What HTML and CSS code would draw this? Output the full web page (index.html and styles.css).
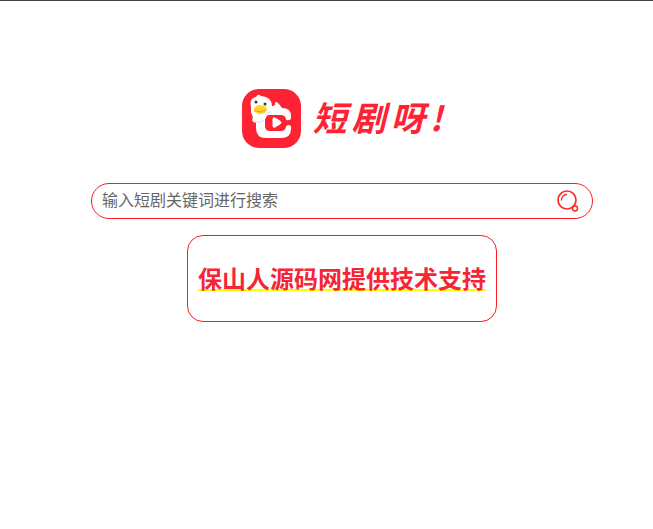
FILE: index.html
```html
<!DOCTYPE html>
<html lang="zh-CN">
<head>
    <meta charset="UTF-8">
    <meta name="viewport" content="width=device-width, initial-scale=1.0">
    <title>短剧呀!</title>
    <link rel="stylesheet" href="styles.css">
</head>
<body>
    <main class="container">
        <h1 class="logo">
            <svg class="logo-icon" viewBox="0 0 59 59" aria-hidden="true">
                <rect width="59" height="59" rx="17" fill="#ff2233"/>
                <!-- 字母 C -->
                <path d="M25 18L31 17Q34 16 33 14Q33 12 36 14Q38 16 40 19Q49 19 49 27V29Q49 31 47 31Q44 32 44 30Q43 26 39 26H28Q23 26 23 31V37Q23 42 28 42H39Q43 42 44 38Q44 36 47 36Q49 36 49 38V40Q49 49 39 49H24Q14 49 14 39V27Q15 18 25 18Z" fill="#fff"/>
                <path d="M31 30Q31 28 33 29L38 32Q40 34 38 35L33 38Q31 39 31 37Z" fill="#fff" stroke="#fff" stroke-linejoin="round"/>
                <!-- 小鸭子 -->
                <path d="M9 18Q7 9 14 8Q16 4 19 7Q30 8 30 17Q30 22 25 24L24 29L19 33Q11 35 10 31Q12 28 9 24Z" fill="#fff"/>
                <path d="M10 31Q13 34 19 33L22 31M25 24Q28 25 29 22" fill="none" stroke="#d9dce2" stroke-width="1"/>
                <path d="M12 20Q14 16 18 16Q25 17 25 20Q24 25 18 25Q11 24 12 20Z" fill="#ffd329"/>
                <path d="M13 22Q18 24 24 21" fill="none" stroke="#e9a51d" stroke-width="1"/>
                <circle cx="14" cy="13" r="1.5" fill="#334"/>
                <circle cx="23" cy="15" r="1.5" fill="#334"/>
            </svg>
            <span class="logo-text"><span>短</span><span>剧</span><span>呀</span><span>!</span></span>
        </h1>
        <form class="search">
            <input class="search-input" type="text" placeholder="输入短剧关键词进行搜索" aria-label="输入短剧关键词进行搜索">
            <button class="search-btn" type="submit" aria-label="搜索">
                <svg viewBox="0 0 22 22" fill="none" stroke="#fb2a30" aria-hidden="true">
                    <circle cx="10" cy="10" r="9" stroke-width="1.7"/>
                    <path d="M4.5 10A5.5 5.5 0 0 1 9.5 4.5" stroke-width="1.4" stroke-linecap="round"/>
                    <circle cx="18" cy="18.5" r="2.5" fill="#fff" stroke-width="1.5"/>
                </svg>
            </button>
        </form>
        <div class="support">
            <h2>保山人源码网提供技术支持</h2>
        </div>
    </main>
</body>
</html>
```

FILE: styles.css
```css
* {
    box-sizing: border-box;
}
body {
    margin: 0;
    border-top: 1px solid #404040;
    background: #fff;
    font-family: "Noto Sans CJK SC", sans-serif;
}
.container {
    display: flex;
    flex-direction: column;
    align-items: center;
    padding: 88px 30px 20px 61px;
}
.logo {
    display: flex;
    align-items: center;
    gap: 12px;
    margin: 0 0 35px;
}
.logo-icon {
    width: 59px;
    height: 59px;
}
.logo-text {
    display: flex;
    gap: 5px;
    color: #ff2233;
    font-size: 34px;
    font-style: italic;
    font-weight: 700;
    line-height: 55px;
    padding-bottom: 4px;
}
.search {
    display: flex;
    align-items: center;
    width: 100%;
    max-width: 502px;
    height: 36px;
    padding: 0 13px 0 10px;
    border: 1px solid #fe1a1f;
    border-radius: 18px;
}
.search-input {
    flex: 1;
    min-width: 0;
    padding: 0 0 4px;
    border: 0;
    outline: none;
    background: none;
    font-family: inherit;
    font-size: 16px;
}
.search-input::placeholder {
    color: #666;
}
.search-btn {
    display: flex;
    padding: 0;
    border: 0;
    background: none;
    cursor: pointer;
}
.search-btn svg {
    width: 22px;
    height: 22px;
}
.support {
    margin-top: 16px;
    padding: 24px 10px 26px;
    border: 1px solid #fe1a1f;
    border-radius: 16px;
}
.support h2 {
    margin: 0;
    color: #f52536;
    font-size: 24px;
    line-height: 35px;
    text-decoration: underline 2px #ffff00;
    text-decoration-skip-ink: none;
}
```
